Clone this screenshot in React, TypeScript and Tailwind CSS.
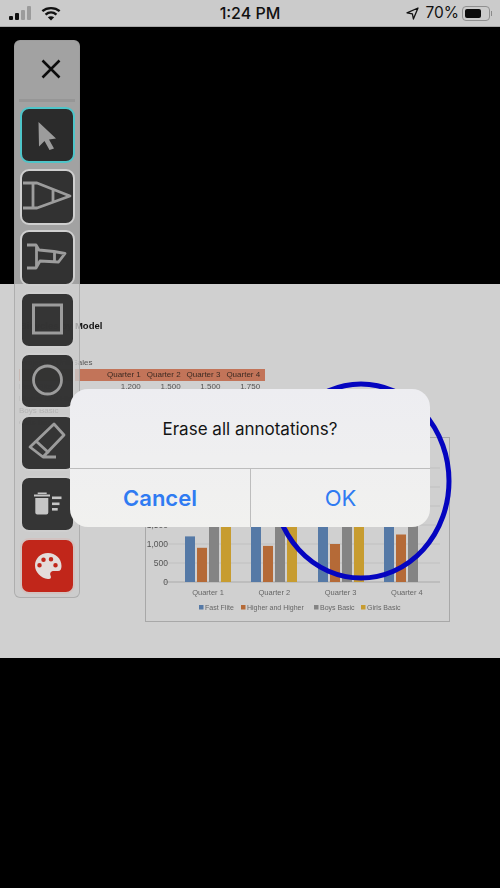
import type { ReactNode } from 'react';

const font = { sans: "font-['Liberation_Sans',sans-serif]", ui: "font-['Inter',sans-serif]" };

const quarters = ['Quarter 1', 'Quarter 2', 'Quarter 3', 'Quarter 4'];

const rows = [
  { label: 'Fast Flite', values: ['1,200', '1,500', '1,500', '1,750'] },
  { label: 'Higher and Higher', values: ['900', '950', '1,000', '1,250'] },
  { label: 'Boys Basic', values: ['', '', '', ''] },
  { label: 'Girls Basic', values: ['', '', '', ''] },
];

// x of the first bar per quarter, heights in units
const groups = [
  { x: 185, v: [1200, 900, 2000, 2000] },
  { x: 251, v: [2000, 950, 2000, 2000] },
  { x: 318, v: [2000, 1000, 2000, 2000] },
  { x: 384, v: [2000, 1250, 2000, 0] },
];
const barColors = ['#5579a6', '#b56a37', '#848484', '#c79c30'];

const legend = [
  { x: 54, label: 'Fast Flite', color: barColors[0] },
  { x: 96, label: 'Higher and Higher', color: barColors[1] },
  { x: 169, label: 'Boys Basic', color: barColors[2] },
  { x: 216, label: 'Girls Basic', color: barColors[3] },
];

function StatusBar() {
  return (
    <div className="h-[27px] bg-[#cbcbcb] border-b border-[#a9a9a9] flex items-center justify-between pl-[9px] pr-[8px] text-[#111]">
      <div className="flex items-center gap-[10px]">
        <div className="flex items-end gap-[2px] h-[14px]">
          <span className="w-[4px] h-[4px] bg-[#111] rounded-[1px]" />
          <span className="w-[4px] h-[7px] bg-[#111] rounded-[1px]" />
          <span className="w-[4px] h-[10px] bg-[#9b9b9b] rounded-[1px]" />
          <span className="w-[4px] h-[14px] bg-[#9b9b9b] rounded-[1px]" />
        </div>
        <svg width="20" height="15" viewBox="0 0 22 16" fill="none" stroke="#111" strokeWidth="2.6">
          <path d="M1.5 5.5C6.5 1 15.5 1 20.5 5.5" />
          <path d="M5 9.2C8.5 6.2 13.5 6.2 17 9.2" />
          <path d="M11 15.8L7.5 12.2C9.5 10.6 12.5 10.6 14.5 12.2Z" fill="#111" stroke="none" />
        </svg>
      </div>
      <div className={`${font.ui} absolute left-0 right-0 text-center text-[16px] font-medium pointer-events-none`}>1:24 PM</div>
      <div className="flex items-center">
        <svg width="13" height="13" viewBox="0 0 13 13" fill="none" stroke="#111" strokeWidth="1.3" strokeLinejoin="round" className="mr-[6px]">
          <path d="M12 1L1 5.8L6.4 6.8L7.4 12Z" />
        </svg>
        <span className={`${font.ui} text-[15.5px] leading-none mr-[3px]`}>70%</span>
        <div className="w-[28px] h-[15px] border-[1.5px] border-[#8f8f8f] rounded-[4px] p-[2px]">
          <div className="w-[16px] h-full bg-[#0c0c0c] rounded-[2px]" />
        </div>
        <span className="w-[1px] h-[5px] bg-[#8a8a8a] ml-[1px]" />
      </div>
    </div>
  );
}

function Chart() {
  // y of value 0 within the svg, 19px per 500 units
  const base = 144;
  const y = (v: number) => base - (v / 500) * 19;
  return (
    <div className="ml-[125px] w-[305px] h-[185px] border border-[#a8a8a8]">
      <svg width="303" height="183" viewBox="0 0 303 183" className="block">
        {[0, 500, 1000, 1500, 2000, 2500, 3000].map((v) => (
          <line key={v} x1="18" x2="294" y1={y(v)} y2={y(v)} stroke={v === 0 ? '#aaaaaa' : '#c0c0c0'} strokeWidth="1" />
        ))}
        {groups.map((g) =>
          g.v.map((v, i) => (
            <rect key={`${g.x}-${i}`} x={g.x - 146 + i * 12} y={y(v)} width="10" height={base - y(v)} fill={barColors[i]} />
          )),
        )}
        {['0', '500', '1,000', '1,500'].map((t, i) => (
          <text key={t} x="22" y={base + 3 - i * 19} textAnchor="end" fontSize="8.5" fill="#555" fontFamily="Liberation Sans">
            {t}
          </text>
        ))}
        {quarters.map((q, i) => (
          <text key={q} x={62 + i * 66.3} y="157" textAnchor="middle" fontSize="7.5" fill="#666" fontFamily="Liberation Sans">
            {q}
          </text>
        ))}
        {legend.map((l) => (
          <g key={l.label}>
            <rect x={l.x - 1} y="167" width="4.5" height="4.5" fill={l.color} />
            <text x={l.x + 5} y="172" fontSize="7" fill="#666" fontFamily="Liberation Sans">
              {l.label}
            </text>
          </g>
        ))}
      </svg>
    </div>
  );
}

function Document() {
  return (
    <div className={`${font.sans} relative h-[374px] bg-[#d0d0d0] pl-[20px] overflow-hidden blur-[0.35px]`}>
      <div className="pt-[36px] h-[66px] text-[9.5px] leading-[12px] font-bold text-[#111]">Bicycles by Model</div>
      <div className="h-[19px] text-[8px] leading-[10px] pt-[8px] text-[#555]">Projected Unit Sales</div>
      <div className="flex h-[12px] w-[246px] -ml-[1px] bg-[#c27459] text-[8px] leading-[12px] text-[#3c2a22]">
        <span className="w-[82px]" />
        {quarters.map((q) => (
          <span key={q} className="w-[39.8px] text-right">{q}</span>
        ))}
      </div>
      {rows.map((r) => (
        <div key={r.label} className="flex h-[12px] w-[246px] -ml-[1px] text-[8px] leading-[12px] text-[#555]">
          <span className="w-[82px]">{r.label}</span>
          {r.values.map((v, i) => (
            <span key={i} className="w-[39.8px] text-right">{v}</span>
          ))}
        </div>
      ))}
      <div className="h-[8px]" />
      <Chart />
    </div>
  );
}

function ToolButton({ children, tone = 'dark' }: { children: ReactNode; tone?: 'active' | 'dark' | 'red' }) {
  const box =
    tone === 'active'
      ? 'border-[#4ec5c9] bg-[#2b2b2b]'
      : tone === 'red'
      ? 'border-[#d2c2c0] bg-[#c1261a]'
      : 'border-[#cfcfcf] bg-[#2c2c2c]/95';
  return (
    <div className={`w-[55px] h-[56px] border-2 rounded-[9px] flex items-center justify-center ${box}`}>
      <svg width="51" height="52" viewBox="0 0 51 52" fill="none" stroke="#9c9c9c" strokeWidth="2.8" className="shrink-0">
        {children}
      </svg>
    </div>
  );
}

function Toolbar() {
  return (
    <div className="absolute left-[14px] top-[40px] w-[66px] h-[558px] rounded-[6px] border border-[#9a9a9a]/60 bg-[#cacaca]/80 flex flex-col items-center">
      <div className="h-[56px] w-full flex items-center justify-center pl-[7px]">
        <svg width="22" height="22" viewBox="0 0 22 22" fill="none" stroke="#0c0c0c" strokeWidth="2.5">
          <path d="M2.5 2.5L19.5 19.5M19.5 2.5L2.5 19.5" />
        </svg>
      </div>
      <div className="w-[56px] h-[3px] mt-[2px] bg-[#949494]/80 mb-[5px]" />
      <div className="flex flex-col gap-[5.5px]">
        <ToolButton tone="active">
          <path d="M16.5 13L34 29.5L27 30.5L32 39.5L27.5 41L22.5 32L17 37.5Z" fill="#9c9c9c" stroke="none" />
        </ToolButton>
        <ToolButton>
          <path d="M1 12H15L48 25L15 37H1M11 12V37M31 18V32" strokeLinejoin="round" />
        </ToolButton>
        <ToolButton>
          <path d="M5 13H14L17 18L32 19.5L43 21.5L36.5 30L18 29L14 36H5M14.5 13V36M32.5 19.5V30" strokeLinejoin="round" />
        </ToolButton>
        <ToolButton>
          <rect x="11.5" y="11" width="28" height="28" strokeWidth="3" />
        </ToolButton>
        <ToolButton>
          <circle cx="25.5" cy="25" r="14" strokeWidth="2.8" />
        </ToolButton>
        <ToolButton>
          <path d="M8 30L32 7L42 18L21 40ZM15 25L27 36M21 40H34" strokeLinejoin="round" />
        </ToolButton>
        <ToolButton>
          <g fill="#c6c6c6" stroke="none">
            <path d="M12 16.5H28V18.5H12ZM15.7 14.5H24.7V16H15.7ZM13.3 20H26.3V34.5A2 2 0 0 1 24.3 36.5H15.3A2 2 0 0 1 13.3 34.5Z" />
            <rect x="30" y="18.5" width="9.5" height="2.6" />
            <rect x="30" y="24.5" width="7.5" height="2.6" />
            <rect x="30" y="30" width="5.7" height="2.6" />
          </g>
        </ToolButton>
        <ToolButton tone="red">
          <path
            fillRule="evenodd"
            fill="#e4dcda"
            stroke="none"
            d="M26 13C18 13 13 19 13 25.5C13 32 18.5 38 26 39C29 39.3 29.5 37.5 28.5 35.5C27.5 33 29 31 32 31H36C38.5 31 39.5 29 39.5 26C39.5 18.5 33.5 13 26 13ZM21.5 17.5A2.2 2.2 0 1 0 21.5 22A2.2 2.2 0 1 0 21.5 17.5ZM29 17A2.2 2.2 0 1 0 29 21.5A2.2 2.2 0 1 0 29 17ZM17.5 23A2.2 2.2 0 1 0 17.5 27.5A2.2 2.2 0 1 0 17.5 23ZM33.5 23A2.2 2.2 0 1 0 33.5 27.5A2.2 2.2 0 1 0 33.5 23Z"
          />
        </ToolButton>
      </div>
    </div>
  );
}

function Alert() {
  return (
    <div className={`${font.ui} absolute left-[70px] top-[389px] w-[360px] h-[138px] rounded-[18px] bg-linear-to-b from-[#ededf1] to-[#f1f1ef] flex flex-col overflow-hidden`}>
      <div className="h-[80px] pt-[2px] border-b border-[#bdbdbd] flex items-center justify-center text-[17px] text-[#141414]">
        Erase all annotations?
      </div>
      <div className="flex-1 flex text-[22px] text-[#2f7bf2]">
        <div className="w-[181px] border-r border-[#bdbdbd] flex items-center justify-center font-semibold">Cancel</div>
        <div className="flex-1 flex items-center justify-center">OK</div>
      </div>
    </div>
  );
}

export default function App() {
  return (
    <div className="relative w-[500px] h-[888px] bg-black overflow-hidden">
      <StatusBar />
      <div className="h-[257px]" />
      <Document />
      <svg width="500" height="888" viewBox="0 0 500 888" fill="none" className="absolute inset-0 pointer-events-none">
        <ellipse cx="361" cy="481" rx="88" ry="97" stroke="#0505c0" strokeWidth="5" />
      </svg>
      <Toolbar />
      <Alert />
    </div>
  );
}
